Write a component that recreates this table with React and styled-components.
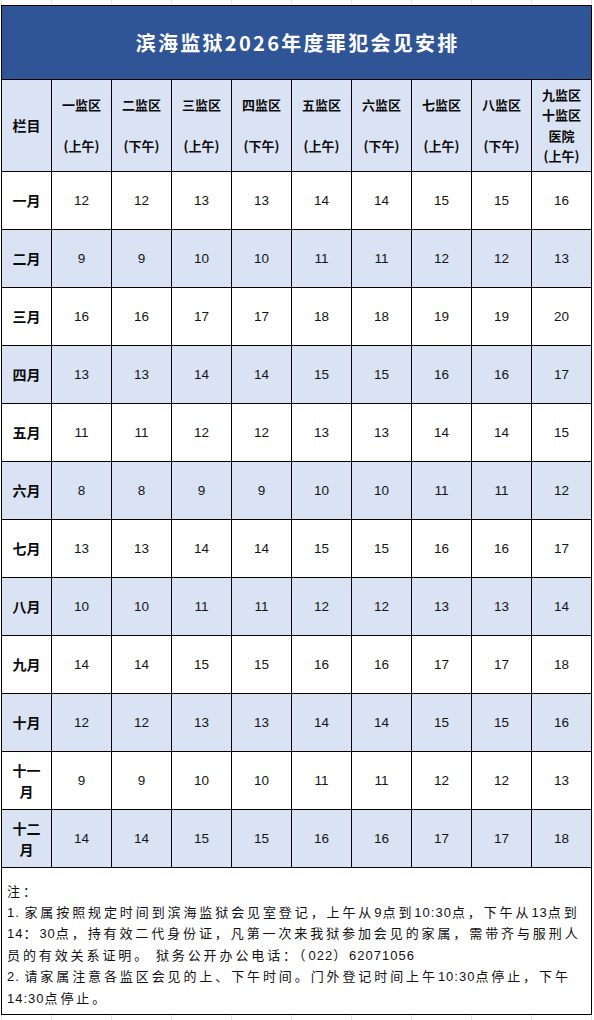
import React from 'react';
import styled, { createGlobalStyle } from 'styled-components';

const GlobalStyle = createGlobalStyle`
  * { box-sizing: border-box; }
  body {
    margin: 0;
    background: #fff;
    color: #111;
    font-family: "Noto Sans CJK SC", "Noto Sans", sans-serif;
  }
`;

const COLS = '50px repeat(9, 60px)';
const BLUE = '#2F5597';
const LIGHT = '#DAE3F3';

const Page = styled.div`
  width: 594px;
  height: 1020px;
  overflow: hidden;
`;

// faint spreadsheet gridlines peeking out above and below the table
const SheetEdge = styled.div`
  display: grid;
  grid-template-columns: 2px ${COLS} 1fr;
  height: ${props => props.$h}px;
  & > span {
    border-right: 1px solid #e2e2e2;
  }
  & > span:last-child {
    border-right: none;
  }
`;

const Sheet = styled.div`
  margin-left: 1px;
  width: 591px;
  display: grid;
  grid-template-columns: ${COLS};
  border-left: 1px solid #000;
  border-top: 1px solid #000;
`;

const Cell = styled.div`
  display: flex;
  align-items: center;
  justify-content: center;
  text-align: center;
  height: 58px;
  border-right: 1px solid #000;
  border-bottom: 1px solid #000;
  background: ${props => (props.$shade ? LIGHT : '#fff')};
`;

const TitleBar = styled(Cell)`
  grid-column: 1 / -1;
  height: 74px;
  background: ${BLUE};
  color: #fff;
  font-size: 20px;
  font-weight: 700;
  letter-spacing: 2.3px;
  padding-left: 2.3px;
`;

const HeadCell = styled(Cell)`
  height: 92px;
  background: ${LIGHT};
  font-size: ${props => (props.$big ? 14 : 13)}px;
  font-weight: 700;
  line-height: 20.5px;
  white-space: pre-line;
  color: #0a0a0a;
`;

const MonthCell = styled(Cell)`
  font-size: 14px;
  font-weight: 700;
  line-height: 21px;
  white-space: pre-line;
  color: #0a0a0a;
`;

const NumCell = styled(Cell)`
  font-family: "Liberation Sans", Arial, sans-serif;
  font-size: 13.5px;
  color: #151515;
`;

const Notes = styled.div`
  grid-column: 1 / -1;
  height: 147px;
  padding: 13px 0 0 5px;
  border-right: 1px solid #000;
  border-bottom: 1px solid #000;
  font-size: 13px;
  letter-spacing: 2.9px;
  line-height: 20.6px;
  white-space: nowrap;
  color: #111;
`;

const NoteLine = styled.div``;

const Num = styled.span`
  font-family: "Liberation Sans", Arial, sans-serif;
  letter-spacing: 1px;
`;

const zones = [
  '一监区\n\n(上午)',
  '二监区\n\n(下午)',
  '三监区\n\n(上午)',
  '四监区\n\n(下午)',
  '五监区\n\n(上午)',
  '六监区\n\n(下午)',
  '七监区\n\n(上午)',
  '八监区\n\n(下午)',
  '九监区\n十监区\n医院\n(上午)',
];

// each month starts at a base day; zones pair up and step by one
const months = [
  ['一月', 12],
  ['二月', 9],
  ['三月', 16],
  ['四月', 13],
  ['五月', 11],
  ['六月', 8],
  ['七月', 13],
  ['八月', 10],
  ['九月', 14],
  ['十月', 12],
  ['十一\n月', 9],
  ['十二\n月', 14],
];

const daysFor = base => [0, 0, 1, 1, 2, 2, 3, 3, 4].map(step => base + step);

const Edge = ({ h }) => (
  <SheetEdge $h={h}>
    {Array.from({ length: 12 }).map((_, i) => <span key={i} />)}
  </SheetEdge>
);

const App = () => {
  return (
    <Page>
      <GlobalStyle />
      <Edge h={5} />
      <Sheet>
        <TitleBar>滨海监狱2026年度罪犯会见安排</TitleBar>

        <HeadCell $big>栏目</HeadCell>
        {zones.map(z => (
          <HeadCell key={z}>{z}</HeadCell>
        ))}

        {months.map(([name, base], row) => (
          <React.Fragment key={name}>
            <MonthCell $shade={row % 2 === 1}>{name}</MonthCell>
            {daysFor(base).map((d, i) => (
              <NumCell key={i} $shade={row % 2 === 1}>{d}</NumCell>
            ))}
          </React.Fragment>
        ))}

        <Notes>
          <NoteLine>注：</NoteLine>
          <NoteLine>
            <Num>1. </Num>家属按照规定时间到滨海监狱会见室登记，上午从<Num>9</Num>点到<Num>10:30</Num>点，下午从<Num>13</Num>点到
          </NoteLine>
          <NoteLine>
            <Num>14</Num>：<Num>30</Num>点，持有效二代身份证，凡第一次来我狱参加会见的家属，需带齐与服刑人
          </NoteLine>
          <NoteLine>
            员的有效关系证明。 狱务公开办公电话：（<Num>022</Num>）<Num>62071056</Num>
          </NoteLine>
          <NoteLine>
            <Num>2. </Num>请家属注意各监区会见的上、下午时间。门外登记时间上午<Num>10:30</Num>点停止，下午
          </NoteLine>
          <NoteLine>
            <Num>14:30</Num>点停止。
          </NoteLine>
        </Notes>
      </Sheet>
      <Edge h={6} />
    </Page>
  );
};

export default App;
